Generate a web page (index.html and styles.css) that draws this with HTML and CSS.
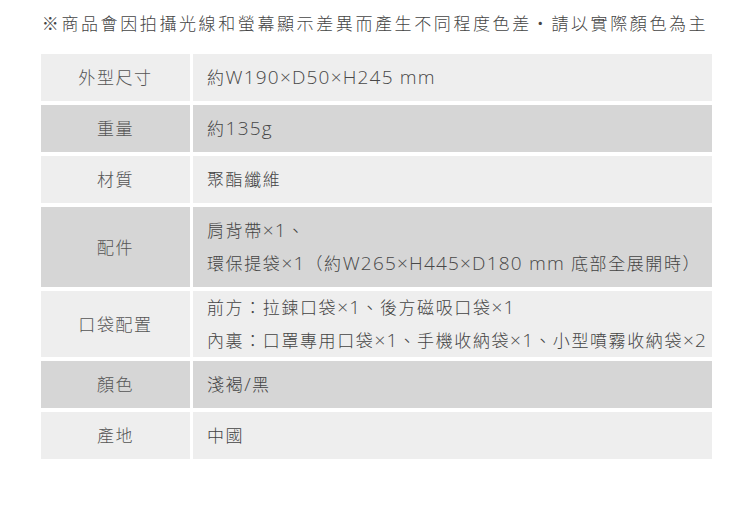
FILE: index.html
```html
<!DOCTYPE html>
<html lang="zh-Hant">
<head>
  <meta charset="UTF-8">
  <meta name="viewport" content="width=device-width, initial-scale=1.0">
  <title>商品規格</title>
  <link rel="stylesheet" href="styles.css">
</head>
<body>

  <!-- Colour notice -->
  <p class="notice">※商品會因拍攝光線和螢幕顯示差異而產生不同程度色差・請以實際顏色為主</p>

  <!-- Spec table -->
  <div class="spec">
    <div class="spec-row light">
      <div class="label">外型尺寸</div>
      <div class="value"><p>約<span class="en">W190×D50×H245 mm</span></p></div>
    </div>
    <div class="spec-row dark">
      <div class="label">重量</div>
      <div class="value"><p>約<span class="en">135g</span></p></div>
    </div>
    <div class="spec-row light">
      <div class="label">材質</div>
      <div class="value"><p>聚酯纖維</p></div>
    </div>
    <div class="spec-row dark">
      <div class="label">配件</div>
      <div class="value">
        <p>肩背帶<span class="en">×1</span>、</p>
        <p>環保提袋<span class="en">×1</span>（約<span class="en">W265×H445×D180 mm</span> 底部全展開時）</p>
      </div>
    </div>
    <div class="spec-row light tight">
      <div class="label">口袋配置</div>
      <div class="value">
        <p>前方：拉鍊口袋<span class="en">×1</span>、後方磁吸口袋<span class="en">×1</span></p>
        <p>內裏：口罩專用口袋<span class="en">×1</span>、手機收納袋<span class="en">×1</span>、小型噴霧收納袋<span class="en">×2</span></p>
      </div>
    </div>
    <div class="spec-row dark">
      <div class="label">顏色</div>
      <div class="value"><p>淺褐<span class="en">/</span>黑</p></div>
    </div>
    <div class="spec-row light">
      <div class="label">產地</div>
      <div class="value"><p>中國</p></div>
    </div>
  </div>

</body>
</html>
```

FILE: styles.css
```css
/* General */
body {
  margin: 0;
  padding: 0;
  background-color: #ffffff;
  color: #444444;
  font-family: 'Open Sans', 'Noto Sans CJK TC', sans-serif;
  font-weight: 300;
}

p {
  margin: 0;
}

/* Notice line */
.notice {
  margin: 12px 0 18px;
  line-height: 24px;
  font-size: 17px;
  letter-spacing: 2.6px;
  text-align: center;
  color: #444444;
}

/* Spec table */
.spec {
  display: flex;
  flex-direction: column;
  gap: 4px;
  width: 671px;
  margin-left: 41px;
}

.spec-row {
  display: grid;
  grid-template-columns: 149px 519px;
  column-gap: 3px;
}

.spec-row.light .label,
.spec-row.light .value {
  background-color: #eeeeee;
}

.spec-row.dark .label,
.spec-row.dark .value {
  background-color: #d6d6d6;
}

.label,
.value {
  padding: 7px 14px;
  line-height: 33px;
  font-size: 17px;
  letter-spacing: 1.6px;
  display: flex;
  flex-direction: column;
  justify-content: center;
}

.label {
  align-items: center;
  color: #555555;
}

.value {
  white-space: nowrap;
}

/* latin runs are set a touch larger, like the original font */
.value .en {
  font-size: 19px;
  font-weight: 350;
  letter-spacing: 1.2px;
  color: #484848;
}

.spec-row.tight .label,
.spec-row.tight .value {
  padding-top: 0;
  padding-bottom: 0;
}
```
